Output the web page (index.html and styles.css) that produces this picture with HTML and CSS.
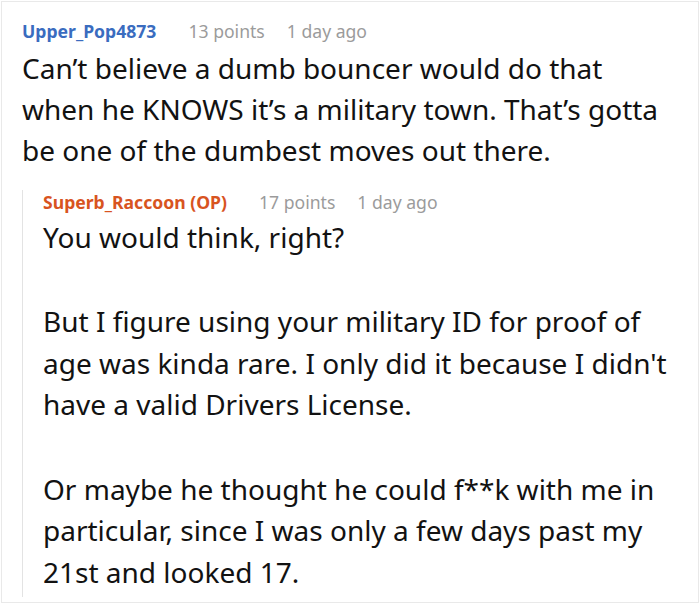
FILE: index.html
```html
<!DOCTYPE html>
<html lang="en">
<head>
<meta charset="utf-8">
<title>Comments</title>
<link rel="stylesheet" href="styles.css">
</head>
<body>
<div class="frame">
  <div class="comment">
    <div class="meta">
      <span class="user user-blue">Upper_Pop4873</span>
      <span class="info">13 points</span>
      <span class="info">1 day ago</span>
    </div>
    <p class="body body-top">Can’t believe a dumb bouncer would do that when he KNOWS it’s a military town. That’s gotta be one of the dumbest moves out there.</p>
    <div class="reply">
      <div class="meta meta-reply">
        <span class="user user-op">Superb_Raccoon (OP)</span>
        <span class="info">17 points</span>
        <span class="info">1 day ago</span>
      </div>
      <p class="body body-first">You would think, right?</p>
      <p class="body body-para">But I figure using your military ID for proof of age was kinda rare. I only did it because I didn't have a valid Drivers License.</p>
      <p class="body body-para">Or maybe he thought he could f**k with me in particular, since I was only a few days past my 21st and looked 17.</p>
    </div>
  </div>
</div>
</body>
</html>
```

FILE: styles.css
```css
html, body {
  margin: 0;
  padding: 0;
  background: #ffffff;
}
body {
  font-family: "Noto Sans", "Open Sans", sans-serif;
  color: #121212;
}
.frame {
  box-sizing: border-box;
  width: 698px;
  height: 602px;
  margin: 1px 0 0 1px;
  border: 1px solid #e9e9e9;
  overflow: hidden;
}
.comment {
  padding: 17px 18px 0 20px;
}
.meta {
  display: flex;
  align-items: baseline;
  gap: 22px;
  font-size: 17.6px;
  line-height: 24px;
}
.user {
  font-weight: 700;
  margin-right: 10px;
}
.user-blue { color: #3a6cbf; }
.user-op { color: #d8541f; }
.info { color: #9b9b9b; }
.body {
  margin: 0;
  font-size: 28px;
  line-height: 41.5px;
}
.body-top {
  max-width: 644px;
  margin-top: 5px;
  line-height: 41px;
}
.reply {
  margin-top: 29px;
  border-left: 1px solid #e3e3e3;
  padding: 0 0 4px 20px;
}
.meta-reply {
  margin-top: -10.5px;
}
.body-first {
  margin-top: 3px;
}
.body-para {
  margin-top: 43px;
}
```
